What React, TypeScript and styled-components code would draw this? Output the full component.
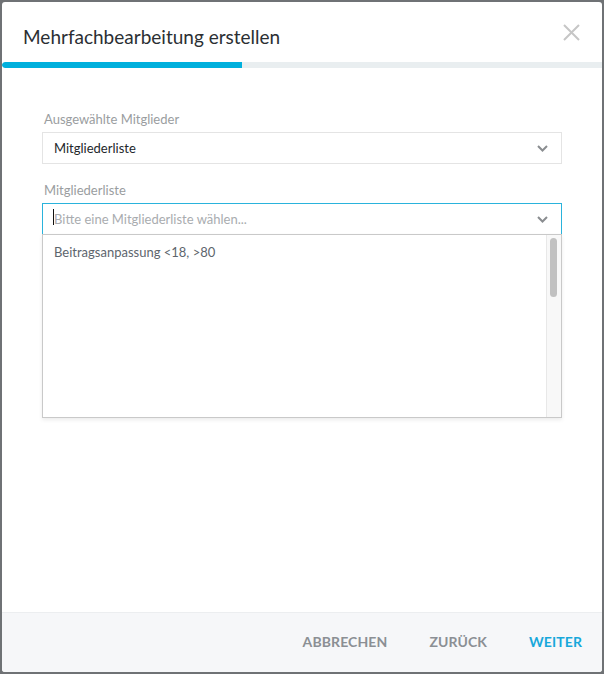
import React from "react";
import styled, { createGlobalStyle } from "styled-components";

const GlobalStyle = createGlobalStyle`
  html, body {
    margin: 0;
    padding: 0;
    background: #6f7275;
  }
  body {
    font-family: Lato, "Noto Sans", sans-serif;
  }
  * {
    box-sizing: border-box;
  }
`;

const Backdrop = styled.div`
  width: 604px;
  height: 674px;
  padding: 2px;
  background: #6f7275;
`;

const Modal = styled.div`
  height: 670px;
  background: #ffffff;
  border-radius: 3px;
  display: flex;
  flex-direction: column;
  overflow: hidden;
`;

const Header = styled.div`
  height: 60px;
  padding: 10px 22px 0 21px;
  display: flex;
  align-items: center;
  justify-content: space-between;
`;

const Title = styled.h2`
  margin: 0;
  font-size: 19px;
  font-weight: 400;
  color: #2b2f33;
  line-height: 24px;
`;

const CloseButton = styled.button`
  border: 0;
  background: none;
  padding: 0;
  width: 17px;
  height: 17px;
  margin-top: -10px;
  display: flex;
  cursor: pointer;
`;

const Track = styled.div`
  height: 6px;
  background: #e9eef0;
  border-radius: 3px 0 0 3px;
  overflow: hidden;
`;

const Fill = styled.div`
  height: 100%;
  background: #00b0dd;
  border-radius: 3px 0 0 3px;
`;

const Body = styled.div`
  flex: 1;
  padding: 42px 40px 0 40px;
`;

const Field = styled.div<{ $gap?: number }>`
  position: relative;
  margin-bottom: ${(p) => p.$gap ?? 0}px;
`;

const Label = styled.div`
  font-size: 13px;
  line-height: 18px;
  color: #9a9da0;
  margin: 0 0 4px 2px;
`;

const SelectBox = styled.div<{ $focused?: boolean }>`
  height: 32px;
  border: 1px solid ${(p) => (p.$focused ? "#2ab3dc" : "#e4e4e4")};
  padding: 0 13px 0 11px;
  display: flex;
  align-items: center;
  font-size: 13px;
  color: #23272b;
`;

const Value = styled.span`
  flex: 1;
`;

const Placeholder = styled.span`
  flex: 1;
  color: #a9acaf;
  position: relative;
`;

const Caret = styled.span`
  position: absolute;
  left: -1px;
  top: -2px;
  width: 1px;
  height: 16px;
  background: #111;
`;

const Menu = styled.div`
  position: absolute;
  left: 0;
  right: 0;
  top: 53px;
  height: 184px;
  border: 1px solid #c9c9c9;
  background: #ffffff;
  box-shadow: 0 2px 4px rgba(0, 0, 0, 0.08);
  display: flex;
`;

const Options = styled.div`
  flex: 1;
  padding: 8px 11px;
`;

const Option = styled.div`
  font-size: 13px;
  line-height: 18px;
  color: #5d656d;
`;

const ScrollTrack = styled.div`
  width: 15px;
  border-left: 1px solid #e8e8e8;
  background: #f8f8f8;
  padding: 3px 0 0 3px;
`;

const ScrollThumb = styled.div`
  width: 7px;
  height: 59px;
  border-radius: 4px;
  background: #c1c1c1;
`;

const Footer = styled.div`
  height: 60px;
  border-top: 1px solid #eceef0;
  background: #f6f7f9;
  display: flex;
  align-items: center;
  justify-content: flex-end;
  gap: 42px;
  padding: 0 20px 2px 0;
`;

const FooterButton = styled.button<{ $primary?: boolean }>`
  border: 0;
  background: none;
  padding: 0;
  font-family: Lato, "Noto Sans", sans-serif;
  font-size: 14px;
  font-weight: 700;
  letter-spacing: 0.1px;
  color: ${(p) => (p.$primary ? "#18a8db" : "#8b8f94")};
  cursor: pointer;
`;

const Chevron = () => (
  <svg width="11" height="7" viewBox="0 0 11 7">
    <polyline
      points="1,1 5.5,5.5 10,1"
      fill="none"
      stroke="#8a8d90"
      strokeWidth="2"
    />
  </svg>
);

const App: React.FC = () => {
  const progress = 40;

  return (
    <>
      <GlobalStyle />
      <Backdrop>
        <Modal>
          <Header>
            <Title>Mehrfachbearbeitung erstellen</Title>
            <CloseButton aria-label="Schließen">
              <svg width="17" height="17" viewBox="0 0 17 17">
                <path
                  d="M1 1 L16 16 M16 1 L1 16"
                  stroke="#c6c6c6"
                  strokeWidth="2"
                  fill="none"
                />
              </svg>
            </CloseButton>
          </Header>
          <Track>
            <Fill style={{ width: `${progress}%` }} />
          </Track>
          <Body>
            <Field $gap={17}>
              <Label>Ausgewählte Mitglieder</Label>
              <SelectBox>
                <Value>Mitgliederliste</Value>
                <Chevron />
              </SelectBox>
            </Field>
            <Field>
              <Label>Mitgliederliste</Label>
              <SelectBox $focused>
                <Placeholder>
                  <Caret />
                  Bitte eine Mitgliederliste wählen...
                </Placeholder>
                <Chevron />
              </SelectBox>
              <Menu>
                <Options>
                  <Option>Beitragsanpassung &lt;18, &gt;80</Option>
                </Options>
                <ScrollTrack>
                  <ScrollThumb />
                </ScrollTrack>
              </Menu>
            </Field>
          </Body>
          <Footer>
            <FooterButton>ABBRECHEN</FooterButton>
            <FooterButton>ZURÜCK</FooterButton>
            <FooterButton $primary>WEITER</FooterButton>
          </Footer>
        </Modal>
      </Backdrop>
    </>
  );
};

export default App;
